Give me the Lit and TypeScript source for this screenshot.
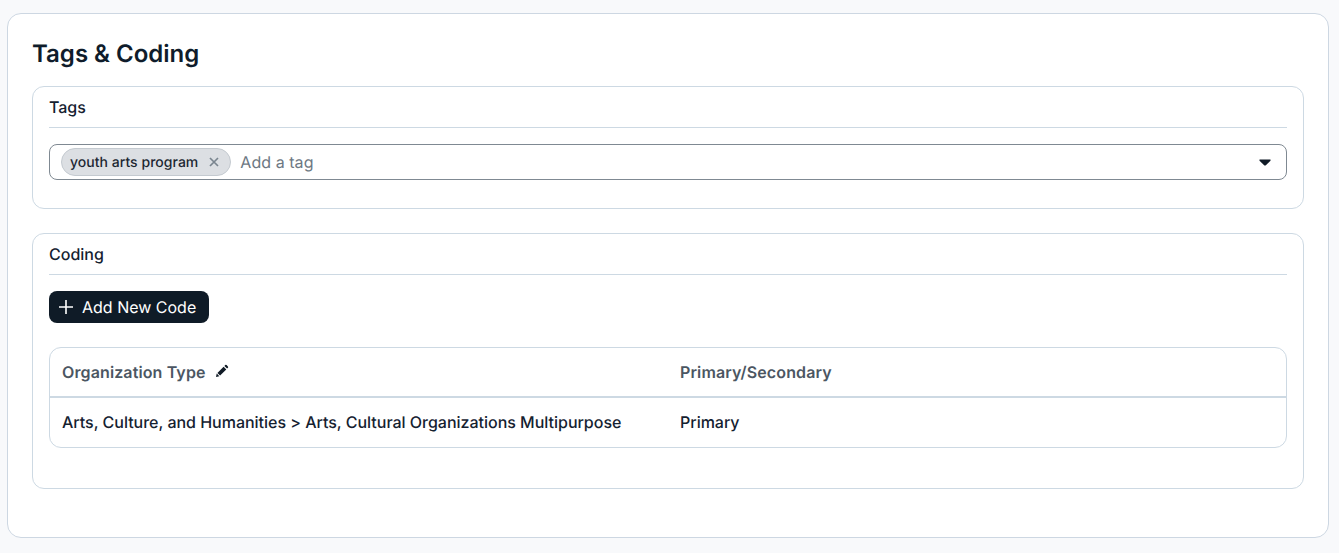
import { LitElement, html, css } from "lit";
import { customElement } from "lit/decorators.js";

@customElement("app-root")
export class AppRoot extends LitElement {
  static styles = css`
    :host { display: block; height: 553px; box-sizing: border-box; padding: 13px 10px 15px 7px; background: #f8f9fb; font-family: Inter, "Liberation Sans", sans-serif; color: #101b26; text-rendering: geometricPrecision; }
    * { box-sizing: border-box; }
    .card { height: 525px; background: #fff; border: 1px solid #cdd7e2; border-radius: 14px; padding: 24px 24px 0; }
    h1 { margin: 0 0 16px; font-size: 24px; line-height: 32px; font-weight: 600; color: #0f1c2b; }
    .section { border: 1px solid #cdd9e3; border-radius: 12px; padding: 0 16px; margin-bottom: 24px; }
    .tags { height: 123px; }
    .coding { height: 256px; }
    .head { height: 41px; border-bottom: 1px solid #cdd9e3; font-size: 16px; line-height: 40px; font-weight: 500; color: #142130; margin-bottom: 16px; }
    .input { height: 36px; border: 1px solid #7f8992; border-radius: 8px; display: flex; align-items: center; padding: 0 15px 0 11px; gap: 9px; }
    .chip { height: 28px; display: flex; align-items: center; gap: 10px; padding: 0 10px 0 8px; background: #dcdfe3; border: 1px solid #c4cad0; border-radius: 14px; font-size: 14px; font-weight: 500; letter-spacing: 0.03px; color: #1c2732; white-space: nowrap; }
    .chip svg { display: block; }
    .ph { flex: 1; font-size: 16px; color: #6d7883; letter-spacing: 0.05px; }
    .btn { height: 32px; width: 160px; border-radius: 8px; background: #0f1b27; color: #fff; display: flex; align-items: center; gap: 8px; padding-left: 9px; font-size: 16px; font-weight: 400; margin-bottom: 24px; }
    .table { height: 101px; border: 1px solid #cdd9e3; border-radius: 12px; }
    .row { display: grid; grid-template-columns: 618px 1fr; align-items: center; padding: 0 12px; font-size: 16px; font-weight: 500; color: #142130; }
    .row.h { height: 50px; border-bottom: 2px solid #cdd9e3; font-weight: 600; color: #4b5662; letter-spacing: 0.12px; }
    .row.b { height: 49px; padding-bottom: 2px; letter-spacing: -0.015px; }
    .th { display: flex; align-items: center; gap: 9px; }
    .pen { position: relative; top: -1px; }
  `;
  render() {
    return html`<div class="card">
      <h1>Tags &amp; Coding</h1>
      <div class="section tags">
        <div class="head">Tags</div>
        <div class="input">
          <div class="chip">youth arts program
            <svg width="12" height="12" viewBox="0 0 12 12"><path d="M2 2l8 8M10 2l-8 8" stroke="#7a858f" stroke-width="1.7" fill="none"/></svg>
          </div>
          <div class="ph">Add a tag</div>
          <svg width="12" height="7" viewBox="0 0 12 7"><path d="M0.5 0.5h11v1.2L6.6 6.5h-1.2L0.5 1.7z" fill="#101b26"/></svg>
        </div>
      </div>
      <div class="section coding">
        <div class="head">Coding</div>
        <div class="btn">
          <svg width="16" height="16" viewBox="0 0 16 16"><path d="M8 1v14M1 8h14" stroke="#fff" stroke-width="1.6" fill="none"/></svg>
          Add New Code
        </div>
        <div class="table">
          <div class="row h">
            <div class="th">Organization Type
              <svg class="pen" width="14" height="14" viewBox="0 0 14 14"><path d="M1 13l.7-3.4 2.7 2.7zM2.4 8.9l6.2-6.2 2.7 2.7-6.2 6.2zM9.4 1.9l.8-.8a1 1 0 0 1 1.4 0l1.3 1.3a1 1 0 0 1 0 1.4l-.8.8z" fill="#101b26"/></svg>
            </div>
            <div>Primary/Secondary</div>
          </div>
          <div class="row b">
            <div>Arts, Culture, and Humanities &gt; Arts, Cultural Organizations Multipurpose</div>
            <div>Primary</div>
          </div>
        </div>
      </div>
    </div>`;
  }
}
